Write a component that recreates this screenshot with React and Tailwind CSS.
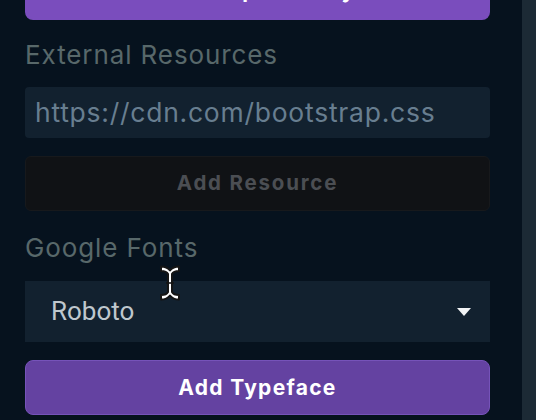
import React from "react";

export default function App() {
  return (
    <div className="relative w-[536px] h-[420px] overflow-hidden bg-[#06121e] flex">
      <div className="w-[522px] h-full flex flex-col pl-[25px] pr-[32px]">
        <button className="-mt-[36px] h-[56px] w-full rounded-[8px] bg-[#7a4dbd] text-white text-[21px] font-bold tracking-[1.4px] font-['Inter',sans-serif] flex items-end justify-center pb-[14px]">
          Add Dependency
        </button>
        <div className="mt-[20px] h-[30px] leading-[30px] text-[26px] tracking-[0.9px] text-[#58686a] font-['Inter',sans-serif]">
          External Resources
        </div>
        <div className="mt-[17px] h-[51px] w-full rounded-[4px] bg-[#12212f] flex items-center pl-[10px] text-[26.5px] tracking-[0.75px] text-[#687e90] font-['Inter',sans-serif]">
          https://cdn.com/bootstrap.css
        </div>
        <button className="mt-[18px] h-[55px] w-full rounded-[6px] bg-[#101215] border border-[#17191c] text-[20.5px] font-bold tracking-[1.8px] text-[#4b4e53] font-['Inter',sans-serif] flex items-center justify-center">
          Add Resource
        </button>
        <div className="mt-[22px] h-[30px] leading-[30px] text-[26px] tracking-[0.9px] text-[#58686a] font-['Inter',sans-serif]">
          Google Fonts
        </div>
        <div className="mt-[18px] h-[61px] w-full bg-[#12212f] flex items-center justify-between pl-[26px] pr-[19px]">
          <span className="text-[26px] text-[#bfc7cd] font-['Roboto',sans-serif]">Roboto</span>
          <svg width="14" height="8" viewBox="0 0 14 8">
            <path d="M0 0 L14 0 L7 8 Z" fill="#f2f4f6" />
          </svg>
        </div>
        <button className="mt-[18px] h-[55px] w-full rounded-[8px] bg-[#6442a1] border border-[#7653b9] text-white text-[21px] font-bold tracking-[1.3px] font-['Inter',sans-serif] flex items-center justify-center">
          Add Typeface
        </button>
      </div>
      <div className="flex-1 h-full bg-[#1c2a35]" />
      <svg
        className="absolute left-[158px] top-[264px]"
        width="24"
        height="38"
        viewBox="0 0 24 38"
      >
        <path
          d="M3 2.5 Q9 2.5 12 6.5 Q15 2.5 21 2.5 L21 7 Q15.5 7 14 10 L14 28 Q15.5 31 21 31 L21 35.5 Q15 35.5 12 31.5 Q9 35.5 3 35.5 L3 31 Q8.5 31 10 28 L10 10 Q8.5 7 3 7 Z"
          fill="#ffffff"
          stroke="#151515"
          strokeWidth="2"
          strokeLinejoin="round"
        />
        <line x1="8" y1="19" x2="16" y2="19" stroke="#151515" strokeWidth="1.6" />
      </svg>
    </div>
  );
}
